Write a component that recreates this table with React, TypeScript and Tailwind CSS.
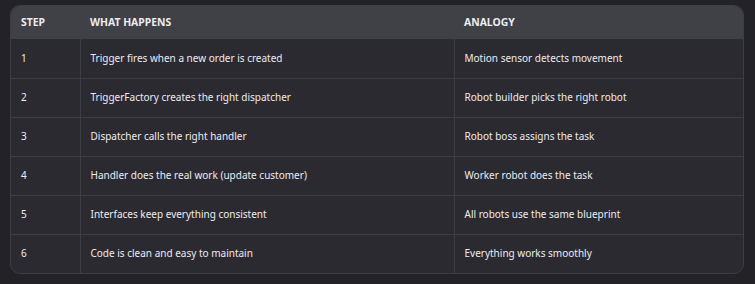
const rows = [
  ["1", "Trigger fires when a new order is created", "Motion sensor detects movement"],
  ["2", "TriggerFactory creates the right dispatcher", "Robot builder picks the right robot"],
  ["3", "Dispatcher calls the right handler", "Robot boss assigns the task"],
  ["4", "Handler does the real work (update customer)", "Worker robot does the task"],
  ["5", "Interfaces keep everything consistent", "All robots use the same blueprint"],
  ["6", "Code is clean and easy to maintain", "Everything works smoothly"],
];

export default function App() {
  return (
    <div className="h-[284px] w-[755px] bg-[#232327] pl-[10px] pr-[11px] pt-[5px] font-['Noto_Sans',sans-serif] text-[10px] text-[#ececf1]">
      <div className="overflow-hidden rounded-[10px] border border-[#3d3d44] bg-[#2b2a30]">
        <table className="w-full table-fixed border-collapse">
          <colgroup>
            <col className="w-[69px]" />
            <col className="w-[374px]" />
            <col />
          </colgroup>
          <thead>
            <tr className="h-[33px] bg-[#404047] text-left text-[10.4px] font-bold">
              <th className="px-[10px]">STEP</th>
              <th className="px-[10px]">WHAT HAPPENS</th>
              <th className="px-[10px]">ANALOGY</th>
            </tr>
          </thead>
          <tbody>
            {rows.map((r, i) => (
              <tr key={r[0]} className={`h-[39px] ${i > 0 ? "border-t border-[#3d3d44]" : ""}`}>
                <td className="px-[10px]">{r[0]}</td>
                <td className="border-l border-[#3d3d44] px-[10px]">{r[1]}</td>
                <td className="border-l border-[#3d3d44] px-[10px]">{r[2]}</td>
              </tr>
            ))}
          </tbody>
        </table>
      </div>
    </div>
  );
}
